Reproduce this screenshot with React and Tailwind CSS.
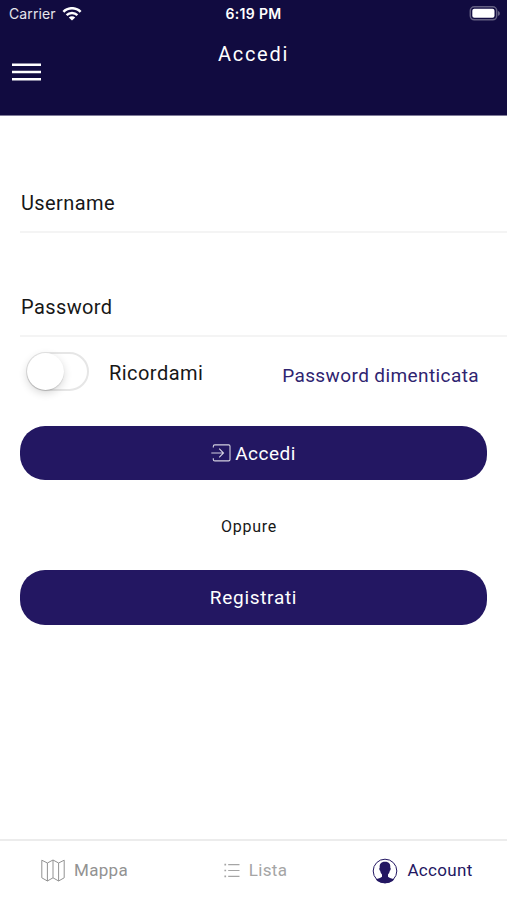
import { useState } from 'react';

const WifiIcon = () => (
  <svg width="20" height="14" viewBox="0 0 20 14" fill="none" aria-hidden>
    <path d="M1.4 4.8a12.2 12.2 0 0 1 17.2 0" stroke="currentColor" strokeWidth="2.6" />
    <path d="M4.6 8.2a7.7 7.7 0 0 1 10.8 0" stroke="currentColor" strokeWidth="2.4" />
    <path d="M10 13.6l-3.2-3.1a4.6 4.6 0 0 1 6.4 0z" fill="currentColor" />
  </svg>
);

const BatteryIcon = () => (
  <svg width="31" height="15" viewBox="0 0 31 15" fill="none" aria-hidden>
    <rect x="1.3" y="0.8" width="26.4" height="13" rx="4" stroke="#fff" strokeOpacity="0.35" strokeWidth="1.5" />
    <rect x="3.3" y="2.8" width="22.2" height="9" rx="2" fill="#fff" />
    <path d="M29.2 5c2 .8 2 4 0 4.8z" fill="#fff" fillOpacity="0.45" />
  </svg>
);

const LoginIcon = () => (
  <svg width="20" height="18" viewBox="0 0 20 18" fill="none" stroke="currentColor" strokeWidth="1.1" opacity="0.8" aria-hidden>
    <path d="M2.3 3.6V2.4Q2.3.9 3.8.9h13.9q1.3 0 1.3 1.3v13.4q0 1.3-1.3 1.3H3.8q-1.5 0-1.5-1.5V14.2" />
    <path d="M.3 9h12M8.2 4.7L12.5 9l-4.3 4.3" />
  </svg>
);

const MapIcon = () => (
  <svg width="24" height="23" viewBox="0 0 24 23" fill="none" stroke="currentColor" strokeWidth="1" strokeLinejoin="round" aria-hidden>
    <path d="M.8 1.2L6.4 4 12 1l5.6 3 5.6-2.8v17.6L17.6 22 12 18.8 6.4 22 .8 18.8z" />
    <path d="M6.4 4v18M12 1v17.8M17.6 4v18" />
  </svg>
);

const ListIcon = () => (
  <svg width="16" height="15" viewBox="0 0 16 15" stroke="currentColor" strokeWidth="1.2" aria-hidden>
    <path d="M4.2 1.7h11.3M4.2 7.5h11.3M4.2 13.3h11.3" />
    <path d="M.4 1.7h1.7M.4 7.5h1.7M.4 13.3h1.7" strokeWidth="1.7" />
  </svg>
);

const AccountIcon = () => (
  <svg width="26" height="26" viewBox="0 0 26 26" aria-hidden>
    <circle cx="13" cy="13" r="11.8" fill="none" stroke="currentColor" strokeWidth="1" />
    <path d="M13 3.8c4.3 0 5.6 2.4 5.3 6 .8.5.4 2.5-.5 3-.3 1.8-1 3-1.8 3.7v2.3c1 1.5 4.1 1.4 6.2 2.6A12.2 12.2 0 0 1 13 25.2a12.2 12.2 0 0 1-9.2-3.8c2.1-1.2 5.2-1.1 6.2-2.6v-2.3c-.8-.7-1.5-1.9-1.8-3.7-.9-.5-1.3-2.5-.5-3-.3-3.6 1-6 5.3-6z" fill="currentColor" />
  </svg>
);

const Field = ({ label, type, className }) => (
  <label className={`ml-5 flex items-end border-b-2 border-[#f4f4f4] pb-4 ${className}`}>
    <span className="text-xl leading-6 tracking-[0.4px] pl-px">{label}</span>
    <input type={type} className="min-w-0 flex-1 h-6 outline-none bg-transparent" />
  </label>
);

const App = () => {
  const [remember, setRemember] = useState(false);

  return (
    <div className="flex flex-col h-[900px] w-full bg-white text-[#171717] font-['Roboto',sans-serif] font-[450]">
      <header className="h-[116px] shrink-0 bg-[#110b40] border-b border-[#7f7b98] text-white">
        <div className="grid grid-cols-3 h-[27px] items-center pl-[9px] pr-[7px] font-['Inter',sans-serif] text-sm">
          <div className="flex items-center gap-[6px]">
            <span className="font-normal tracking-[0.1px] text-white/90">Carrier</span>
            <WifiIcon />
          </div>
          <span className="text-center font-semibold tracking-[0.35px] -ml-[2px]">6:19 PM</span>
          <div className="flex justify-end"><BatteryIcon /></div>
        </div>
        <h1 className="pt-[15px] text-center text-xl leading-6 tracking-[1.7px] font-[450]">Accedi</h1>
        <button className="ml-3 -mt-[3px] block w-[29px]" aria-label="Menu">
          <svg width="29" height="18" viewBox="0 0 29 18" stroke="currentColor" strokeWidth="2.6" aria-hidden>
            <path d="M0 1.8h29M0 9h29M0 16.2h29" />
          </svg>
        </button>
      </header>

      <main className="flex-1 flex flex-col">
        <Field label="Username" type="text" className="h-[117px]" />
        <Field label="Password" type="password" className="h-[104px]" />

        <div className="flex items-center h-[72px] pl-[26px] pr-7">
          <button
            role="switch"
            aria-checked={remember}
            aria-label="Ricordami"
            onClick={() => setRemember(!remember)}
            className={`flex items-center w-[63px] h-[39px] mb-1 rounded-full border-2 border-[#e6e6e6] ${remember ? 'justify-end bg-[#231762]' : 'bg-white'}`}
          >
            <span className="-ml-px size-[37px] shrink-0 rounded-full bg-white shadow-[0_3px_8px_rgba(0,0,0,0.16),0_1px_1px_rgba(0,0,0,0.14)]" />
          </button>
          <span className="ml-5 text-xl tracking-[0.45px]">Ricordami</span>
          <a href="#" className="ml-auto pt-[6px] text-[19px] tracking-[0.4px] text-[#2f2470]">Password dimenticata</a>
        </div>

        <button className="mx-5 mt-[17px] h-[54px] rounded-[25px] bg-[#231762] text-white flex items-center justify-center gap-1 text-[19px] tracking-[0.5px]">
          <LoginIcon />
          <span className="pt-[2px]">Accedi</span>
        </button>
        <p className="h-[90px] flex items-center justify-center pr-[9px] pt-[3px] text-base tracking-[0.7px]">Oppure</p>
        <button className="mx-5 h-[55px] rounded-[25px] bg-[#231762] text-white text-[19px] tracking-[0.7px] pt-[2px]">
          Registrati
        </button>
      </main>

      <nav className="h-[61px] shrink-0 grid grid-cols-3 border-t-2 border-[#ececec] text-[17px] tracking-[0.3px] text-[#929292]">
        <a href="#" className="flex items-center justify-center gap-[9px]">
          <MapIcon />
          <span>Mappa</span>
        </a>
        <a href="#" className="flex items-center justify-center gap-[9px] pl-1 text-[#a5a5a5]">
          <ListIcon />
          <span>Lista</span>
        </a>
        <a href="#" className="flex items-center justify-center gap-[9px] text-[#231762]">
          <AccountIcon />
          <span>Account</span>
        </a>
      </nav>
    </div>
  );
};

export default App;
